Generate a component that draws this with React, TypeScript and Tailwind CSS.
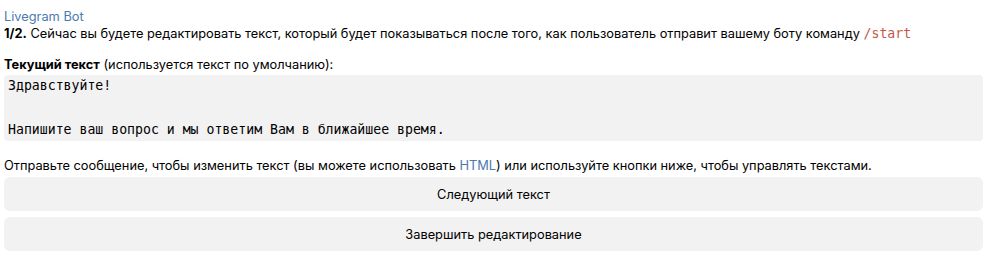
import React from "react";

export default function App() {
  return (
    <div className="w-[1000px] h-[258px] bg-white text-[12.8px] leading-[17px] text-[#000]" style={{ fontFamily: "Inter, 'Noto Sans', sans-serif" }}>
      <div className="pl-[4px] pr-[17px] pt-[8px]">
        <div className="text-[#4a7ab0]">Livegram Bot</div>
        <div>
          <b className="font-bold">1/2.</b> Сейчас вы будете редактировать текст, который будет показываться после того, как пользователь отправит вашему боту команду{" "}
          <span className="text-[13.2px] text-[#c8554a]" style={{ fontFamily: "'DejaVu Sans Mono', monospace" }}>/start</span>
        </div>
        <div className="h-[14px]" />
        <div>
          <b className="font-bold">Текущий текст</b> (используется текст по умолчанию):
        </div>
        <pre className="mt-[2px] bg-[#f2f2f2] rounded-[4px] px-[4px] py-0 text-[13.2px] leading-[22px] whitespace-pre-wrap" style={{ fontFamily: "'DejaVu Sans Mono', monospace" }}>
{`Здравствуйте!

Напишите ваш вопрос и мы ответим Вам в ближайшее время.`}
        </pre>
        <div className="mt-[16px]">
          Отправьте сообщение, чтобы изменить текст (вы можете использовать <span className="text-[#4a7ab0]">HTML</span>) или используйте кнопки ниже, чтобы управлять текстами.
        </div>
        <div className="mt-[3px] flex flex-col gap-[6px]">
          <div className="h-[34px] rounded-[6px] bg-[#f2f2f2] flex items-center justify-center">Следующий текст</div>
          <div className="h-[34px] rounded-[6px] bg-[#f2f2f2] flex items-center justify-center">Завершить редактирование</div>
        </div>
      </div>
    </div>
  );
}
